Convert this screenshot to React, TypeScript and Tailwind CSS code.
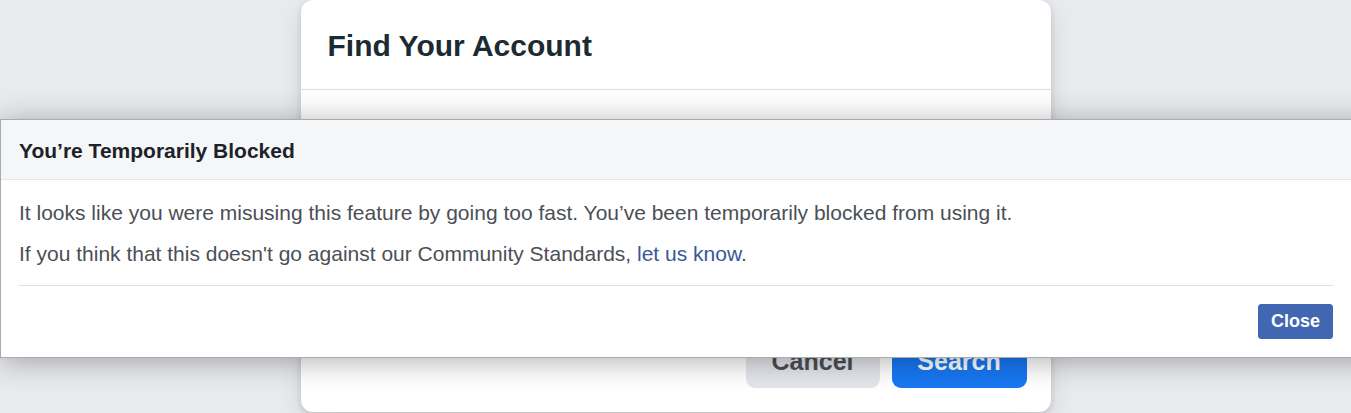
import React from 'react';

const font = { fontFamily: '"Liberation Sans", Arial, Helvetica, sans-serif' };

const FindAccountCard: React.FC = () => (
  <div className="w-[750px] h-[412px] bg-white rounded-[12px] flex flex-col shadow-[0_2px_6px_rgba(0,0,0,0.12),0_8px_24px_rgba(0,0,0,0.1)]">
    <header className="h-[90px] px-[27px] pt-[2px] flex items-center border-b border-[#dadde1]">
      <h1 className="text-[30px] font-bold text-[#1c2b33] leading-none">Find Your Account</h1>
    </header>
    <div className="flex-1" />
    <footer className="flex justify-end gap-[12px] px-[24px] pb-[24px]">
      <button className="w-[134px] h-[52px] rounded-[9px] bg-[#e4e6eb] text-[#4b4f56] text-[25px] font-bold">Cancel</button>
      <button className="w-[135px] h-[52px] rounded-[9px] bg-[#1877f2] text-white text-[25px] font-bold">Search</button>
    </footer>
  </div>
);

const BlockedDialog: React.FC = () => (
  <div className="absolute left-0 top-[119px] w-[1400px] bg-white border border-[#a9abaf] shadow-[0_3px_28px_rgba(0,0,0,0.32)]">
    <div className="h-[60px] bg-[#f5f6f7] border-b border-[#e5e5e5] flex items-center px-[18px]">
      <h2 className="text-[21px] font-bold text-[#1d2129] leading-none pt-[1px]">You’re Temporarily Blocked</h2>
    </div>
    <div className="w-[1351px] px-[18px] pt-[19px] pb-[18px]">
      <p className="text-[21px] leading-[27px] text-[#4b4f56]">
        It looks like you were misusing this feature by going too fast. You’ve been temporarily blocked from using it.
      </p>
      <p className="mt-[14px] text-[21px] leading-[27px] text-[#4b4f56]">
        If you think that this doesn't go against our Community Standards, <a className="text-[#385898]">let us know</a>.
      </p>
      <div className="mt-[18px] border-t border-[#dddfe2] w-[1314px]" />
      <div className="flex justify-end w-[1314px] mt-[18px]">
        <button className="w-[75px] h-[35px] rounded-[3px] bg-[#4267b2] border border-[#4267b2] text-white text-[18px] font-bold">Close</button>
      </div>
    </div>
  </div>
);

export default function App() {
  return (
    <div style={font} className="relative h-[413px] w-full overflow-hidden bg-[#e9eaee] flex justify-center">
      <FindAccountCard />
      <BlockedDialog />
    </div>
  );
}
